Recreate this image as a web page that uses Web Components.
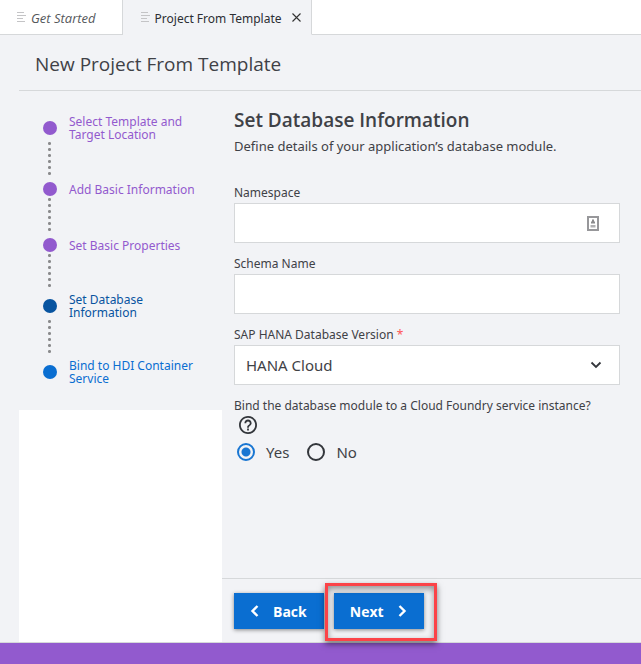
<!DOCTYPE html>
<html lang="en">
<head>
<meta charset="utf-8">
<title>New Project From Template</title>
<style>
  :root {
    --surface: #f2f3f6;
    --line: #d6d8da;
    --text: #3f4146;
    --blue: #0a6ed1;
    --navy: #0854a0;
    --purple: #925ace;
    --display: "Open Sans", "Noto Sans", sans-serif;
  }
  html, body { margin: 0; }
  body {
    background: #fff;
    color: var(--text);
    font-family: "Noto Sans", "Open Sans", sans-serif;
    font-size: 12px;
  }
</style>
</head>
<body>
<app-window></app-window>

<script>
const define = (name, html, setup) => {
  const template = document.createElement("template");
  template.innerHTML = html;
  customElements.define(name, class extends HTMLElement {
    constructor() {
      super();
      this.attachShadow({ mode: "open" }).append(template.content.cloneNode(true));
    }
    connectedCallback() {
      if (setup) setup(this, this.shadowRoot);
    }
  });
};

define("editor-tab", `
  <style>
    :host { display: flex; border-right: 1px solid var(--line); border-bottom: 1px solid var(--line); box-sizing: border-box; background: #fff; }
    :host([active]) { background: var(--surface); border-bottom-color: var(--surface); }
    .tab, .close { border: 0; background: none; color: #55585c; font: inherit; padding: 0; display: flex; align-items: center; }
    .tab { gap: 4px; padding: 2px 10px 0 16px; font-size: 12px; }
    .tab svg { margin-bottom: 3px; }
    :host(:not([active])) .tab { font-family: var(--display); font-size: 13px; font-style: italic; padding-right: 26px; }
    :host([active]) .tab { color: #2c2e33; padding-left: 17px; }
    .close { padding: 1px 10px 0 0; color: #333; }
    :host(:not([active])) .close { display: none; }
  </style>
  <button class="tab" role="tab">
    <svg width="11" height="12" viewBox="0 0 11 12" fill="none" stroke="#c4c4c6" stroke-width="1" aria-hidden="true"><path d="M1 1.500h7M1 4.500h9M1 7.500h6M1 10.500h8"/></svg>
    <slot></slot>
  </button>
  <button class="close" aria-label="Close tab">
    <svg width="9" height="9" viewBox="0 0 9 9" fill="none" stroke="currentColor" stroke-width="1.100"><path d="M.5.5l8 8M8.500.500l-8 8"/></svg>
  </button>
`);

define("wizard-step", `
  <style>
    :host { display: block; color: var(--purple); }
    :host([state="current"]) { color: var(--navy); }
    :host([state="next"]) { color: var(--blue); }
    .row { display: grid; grid-template-columns: 14px 1fr; column-gap: 12px; align-items: center; min-height: 16px; }
    .dot { width: 14px; height: 14px; border-radius: 50%; background: currentColor; }
    a { color: inherit; text-decoration: none; line-height: 13px; font-size: 12px; }
    .link { width: 3px; height: 33px; margin: 1px 0 6px 5px; background: radial-gradient(circle at 1.5px 1.5px, #8b8b8d 1.2px, transparent 1.8px) 0 0 / 3px 6px; }
    :host(:last-of-type) .link { display: none; }
  </style>
  <div class="row"><span class="dot"></span><a href="#"><slot></slot></a></div>
  <div class="link"></div>
`);

define("text-field", `
  <style>
    :host { display: block; }
    label { display: block; font-size: 12px; line-height: 20px; }
    .box { display: flex; align-items: center; height: 38px; border: 1px solid var(--line); background: #fff; }
    input { flex: 1; min-width: 0; height: 100%; border: 0; padding: 0 12px; background: transparent; font: inherit; font-size: 15px; outline: 0; }
    ::slotted(svg) { margin-right: 20px; }
  </style>
  <label for="control"></label>
  <div class="box"><input id="control" type="text"><slot></slot></div>
`, (host, root) => { root.querySelector("label").textContent = host.getAttribute("label"); });

define("version-select", `
  <style>
    :host { display: block; }
    label { display: block; font-size: 12px; line-height: 20px; }
    .star { color: #f55; }
    .box { display: grid; align-items: center; height: 38px; border: 1px solid var(--line); background: #fff; }
    .box > * { grid-area: 1 / 1; }
    select { appearance: none; width: 100%; height: 100%; border: 0; padding: 0 40px 0 11px; background: transparent; color: inherit; font: inherit; font-size: 15px; outline: 0; }
    svg { justify-self: end; margin-right: 17px; pointer-events: none; }
  </style>
  <label for="control">SAP HANA Database Version <span class="star">*</span></label>
  <div class="box">
    <select id="control" required><option>HANA Cloud</option></select>
    <svg width="12" height="8" viewBox="0 0 12 8" fill="none" stroke="#33363b" stroke-width="1.8"><path d="M1.500 1.500L6 6l4.500-4.500"/></svg>
  </div>
`);

define("service-choice", `
  <style>
    :host { display: block; }
    fieldset { border: 0; margin: 0; padding: 0; min-width: 0; }
    legend { padding: 0; font-size: 12px; line-height: 20px; }
    .help { display: flex; border: 0; padding: 0; margin: 0 0 0 5px; background: none; color: #33363b; }
    .options { display: flex; gap: 18px; margin-top: 7px; padding-left: 3px; }
    label { display: flex; align-items: center; gap: 11px; font-size: 15px; line-height: 22px; }
    input { appearance: none; box-sizing: border-box; width: 18px; height: 18px; margin: 0; border: 2px solid #33363b; border-radius: 50%; }
    input:checked { border-color: #1976d2; background: radial-gradient(circle, #1976d2 4px, transparent 5px); }
  </style>
  <fieldset>
    <legend>Bind the database module to a Cloud Foundry service instance?</legend>
    <button class="help" type="button" aria-label="Help">
      <svg width="18" height="18" viewBox="2 2 20 20" fill="currentColor"><path d="M11 18h2v-2h-2v2zm1-16C6.480 2 2 6.480 2 12s4.480 10 10 10 10-4.480 10-10S17.520 2 12 2zm0 18c-4.410 0-8-3.590-8-8s3.590-8 8-8 8 3.590 8 8-3.590 8-8 8zm0-14c-2.210 0-4 1.790-4 4h2c0-1.100.9-2 2-2s2 .9 2 2c0 2-3 1.750-3 5h2c0-2.250 3-2.500 3-5 0-2.210-1.790-4-4-4z"/></svg>
    </button>
    <div class="options">
      <label><input type="radio" name="bind" checked>Yes</label>
      <label><input type="radio" name="bind">No</label>
    </div>
  </fieldset>
`);

define("action-button", `
  <style>
    :host { display: block; }
    button { display: flex; align-items: center; gap: 14px; height: 36px; padding: 0 17px 0 16px; border: 0; background: var(--blue); color: #fff; font-family: var(--display); font-size: 14px; font-weight: 700; box-shadow: 0 1px 4px rgba(0,0,0,.45); }
  </style>
  <button type="button"><slot></slot></button>
`);

define("app-window", `
  <style>
    :host { display: flex; flex-direction: column; min-height: 100vh; background: var(--surface); }
    nav { display: flex; height: 35px; background: #fff; }
    nav::after { content: ""; flex: 1; border-bottom: 1px solid var(--line); }
    header { margin-left: 19px; padding: 16px 16px 13px; border-bottom: 1px solid var(--line); }
    h1, h2, p { margin: 0; font-weight: 400; }
    h1, h2 { font-family: var(--display); font-size: 19px; line-height: 26px; }
    .work { flex: 1; display: grid; grid-template-columns: 203px minmax(0, 1fr); margin-left: 19px; }
    aside { background: #fff; }
    .steps { background: var(--surface); padding: 24px 14px 25px 24px; }
    main { display: flex; flex-direction: column; }
    form { flex: 1; padding: 16px 21px 16px 12px; }
    h2 { font-weight: 600; }
    p { font-size: 13px; line-height: 26px; }
    .fields { display: grid; gap: 11px; margin-top: 24px; }
    footer { display: flex; gap: 10px; padding: 14px 12px 13px; border-top: 1px solid var(--line); }
    .marked { position: relative; }
    .marked::after { content: ""; position: absolute; inset: -10px -13px -12px -9px; border: 3px solid #fb4348; box-shadow: 0 3px 6px rgba(0,0,0,.5), inset 0 3px 6px rgba(0,0,0,.4); pointer-events: none; }
    .status { height: 21px; background: var(--purple); border-top: 1px solid var(--line); }
  </style>
  <nav role="tablist">
    <editor-tab>Get Started</editor-tab>
    <editor-tab active>Project From Template</editor-tab>
  </nav>
  <header><h1>New Project From Template</h1></header>
  <div class="work">
    <aside>
      <div class="steps">
        <wizard-step>Select Template and Target Location</wizard-step>
        <wizard-step>Add Basic Information</wizard-step>
        <wizard-step>Set Basic Properties</wizard-step>
        <wizard-step state="current">Set Database Information</wizard-step>
        <wizard-step state="next">Bind to HDI Container Service</wizard-step>
      </div>
    </aside>
    <main>
      <form>
        <h2>Set Database Information</h2>
        <p>Define details of your application’s database module.</p>
        <div class="fields">
          <text-field label="Namespace">
            <svg width="12" height="15" viewBox="0 0 12 15" fill="none"><rect x="1" y="1" width="10" height="13" stroke="#97979a" stroke-width="2"/><path d="M5 3.500h2v2h1v2H4v-2h1z" fill="#8c8c8e"/><path d="M3.500 9h5v2.500h-5z" fill="#b0b0b2"/></svg>
          </text-field>
          <text-field label="Schema Name"></text-field>
          <version-select></version-select>
          <service-choice></service-choice>
        </div>
      </form>
      <footer>
        <action-button><svg width="9" height="12" viewBox="0 0 9 12" fill="none" stroke="#fff" stroke-width="2.400"><path d="M7.500 1L2.500 6l5 5"/></svg>Back</action-button>
        <action-button class="marked">Next<svg width="9" height="12" viewBox="0 0 9 12" fill="none" stroke="#fff" stroke-width="2.400"><path d="M1.500 1l5 5-5 5"/></svg></action-button>
      </footer>
    </main>
  </div>
  <div class="status"></div>
`);
</script>
</body>
</html>
